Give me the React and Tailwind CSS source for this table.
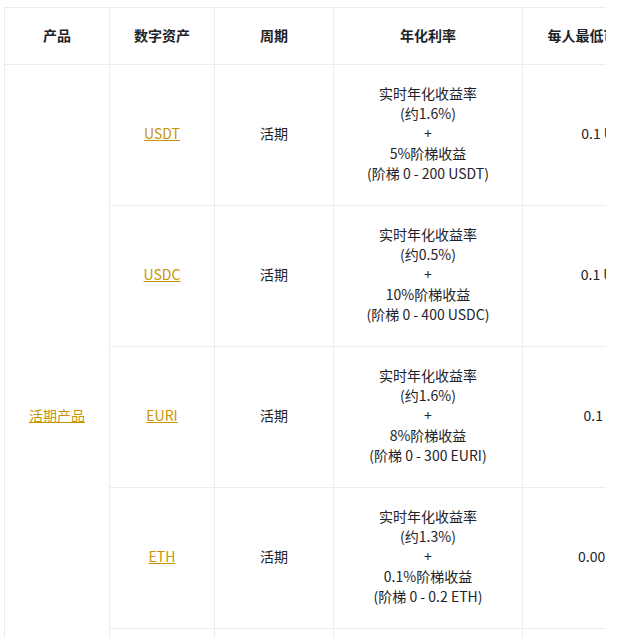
import React from 'react';

const rows = [
  { asset: 'USDT', rate: '1.6%', tier: '5%', range: '0 - 200 USDT', min: '0.1 USDT' },
  { asset: 'USDC', rate: '0.5%', tier: '10%', range: '0 - 400 USDC', min: '0.1 USDC' },
  { asset: 'EURI', rate: '1.6%', tier: '8%', range: '0 - 300 EURI', min: '0.1 EURI' },
  { asset: 'ETH', rate: '1.3%', tier: '0.1%', range: '0 - 0.2 ETH', min: '0.001 ETH' },
  { asset: 'BNB', rate: '0.6%', tier: '0.5%', range: '0 - 1 BNB', min: '0.001 BNB' },
];

const cell = 'border border-[#eaecef] text-center align-middle px-4';

const App = () => {
  return (
    <div
      className="pt-[7px] pl-[4px] bg-white text-[14px] leading-[20px] text-[#1e2329]"
      style={{ fontFamily: '"Noto Sans CJK SC", sans-serif' }}
    >
      <div className="w-[602px] overflow-hidden">
        <table className="table-fixed border-collapse w-[694px]">
          <colgroup>
            <col className="w-[105px]" />
            <col className="w-[105px]" />
            <col className="w-[119px]" />
            <col className="w-[189px]" />
            <col className="w-[176px]" />
          </colgroup>
          <thead>
            <tr>
              {['产品', '数字资产', '周期', '年化利率', '每人最低可申购额度'].map((h) => (
                <th key={h} className={`${cell} h-[57px] pt-0 pb-[2px] font-bold whitespace-nowrap`}>{h}</th>
              ))}
            </tr>
          </thead>
          <tbody>
            {rows.map((r, i) => (
              <tr key={r.asset}>
                {i === 0 && (
                  <td rowSpan={rows.length} className={`${cell} pb-[4px]`}>
                    <a href="#" className="text-[#c99400] underline">活期产品</a>
                  </td>
                )}
                <td className={`${cell} pb-[4px]`}>
                  <a href="#" className="text-[#c99400] underline">{r.asset}</a>
                </td>
                <td className={`${cell} pb-[4px]`}>活期</td>
                <td className={`${cell} pt-[18px] pb-[22px] h-[141px]`}>
                  <div>实时年化收益率</div>
                  <div>(约{r.rate})</div>
                  <div>+</div>
                  <div>{r.tier}阶梯收益</div>
                  <div>(阶梯 {r.range})</div>
                </td>
                <td className={`${cell} pb-[4px] whitespace-nowrap`}>{r.min}</td>
              </tr>
            ))}
          </tbody>
        </table>
      </div>
    </div>
  );
};

export default App;
